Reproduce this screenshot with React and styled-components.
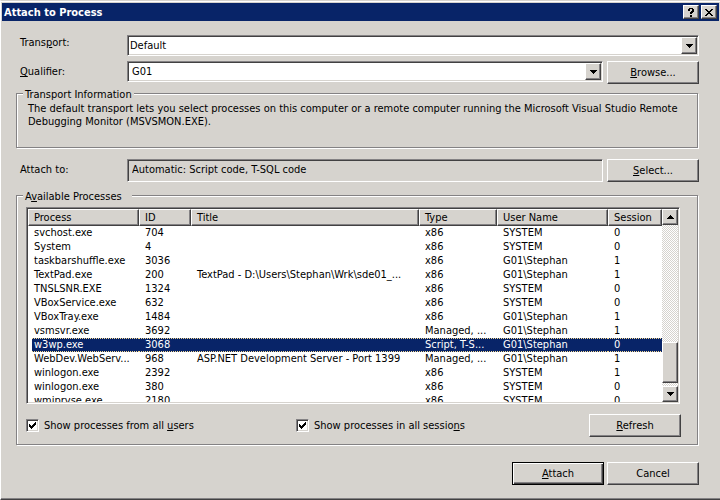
import React, { useState } from "react";
import styled, { createGlobalStyle, css } from "styled-components";

const GlobalStyle = createGlobalStyle`
  * {
    box-sizing: border-box;
  }

  body {
    margin: 0;
    background: #d6d3ce;
  }

  body, button, input, select {
    font-family: Tahoma, "DejaVu Sans Condensed", "DejaVu Sans", sans-serif;
    font-stretch: condensed;
    font-size: 11px;
    line-height: 13px;
    color: #000;
  }
`;

const raised = css`
  border: 1px solid;
  border-color: #fff #424142 #424142 #fff;
  box-shadow: inset -1px -1px 0 #848284;
`;

const sunken = css`
  border: 1px solid;
  border-color: #848284 #fff #fff #848284;
  box-shadow: inset 1px 1px 0 #424142, inset -1px -1px 0 #d6d3ce;
`;

const Dialog = styled.main`
  display: flex;
  flex-direction: column;
  min-height: 100vh;
  padding: 1px 1px 0;
  background: #d6d3ce;
  border-top: 1px solid #d6d3ce;
  border-left: 1px solid #fff;
  border-bottom: 1px solid #424142;
  box-shadow: inset 0 1px 0 #fff, inset 0 -1px 0 #848284;
`;

const TitleBar = styled.header`
  display: flex;
  align-items: center;
  gap: 2px;
  height: 18px;
  margin-top: 1px;
  padding: 0 2px;
  background: #082468;
`;

const Title = styled.h1`
  flex: 1;
  margin: 0;
  color: #fff;
  font-size: 11px;
  font-weight: bold;
`;

const CaptionButton = styled.button`
  ${raised}
  display: flex;
  align-items: center;
  justify-content: center;
  width: 16px;
  height: 14px;
  padding: 0;
  background: #d6d3ce;
`;

const Content = styled.form`
  display: flex;
  flex-direction: column;
  padding: 14px 20px 12px 14px;
`;

const Row = styled.div`
  display: flex;
  align-items: flex-start;
  gap: 4px;
  margin: ${(p) => p.$margin};
`;

const Label = styled.label`
  width: 107px;
  padding: ${(p) => (p.$high ? "1px" : "4px")} 0 0 4px;
`;

const Combo = styled.div`
  position: relative;
  display: flex;
  flex: 1;
`;

const Select = styled.select`
  ${sunken}
  appearance: none;
  flex: 1;
  height: 21px;
  padding: 0 20px 0 ${(p) => p.$indent}px;
  background: #fff;
  border-radius: 0;
  outline: none;
`;

const ComboArrow = styled.span`
  ${raised}
  position: absolute;
  top: 2px;
  right: 2px;
  display: flex;
  align-items: center;
  justify-content: center;
  width: 16px;
  height: 17px;
  background: #d6d3ce;
  pointer-events: none;
`;

const TextBox = styled.input`
  ${sunken}
  flex: 1;
  min-width: 0;
  height: 23px;
  padding: 0 4px 2px;
  background: #d6d3ce;
  outline: none;
`;

const Button = styled.button`
  ${raised}
  width: 92px;
  height: 23px;
  padding: 0;
  background: #d6d3ce;
  ${(p) =>
    p.$default &&
    css`
      border-color: #000;
      box-shadow: inset 1px 1px 0 #fff, inset -1px -1px 0 #424142,
        inset -2px -2px 0 #848284;
    `}
`;

const Group = styled.fieldset`
  min-width: 0;
  margin: 0 1px 0 0;
  padding: 0 16px 0 9px;
  border: 1px solid #848284;
  box-shadow: inset 1px 1px 0 #fff, 1px 1px 0 #fff;
`;

const Legend = styled.legend`
  margin-left: -3px;
  padding: 2px ${(p) => p.$gap || 2}px 0 2px;
  background: #d6d3ce;
`;

const Info = styled.p`
  margin: 0;
  padding: 1px 0 19px 2px;
`;

const List = styled.div`
  ${sunken}
  display: flex;
  height: 197px;
  margin: 4px 1px 0 0;
  padding: 1px;
  background: #fff;
`;

const TableView = styled.div`
  flex: 1;
  min-width: 0;
  overflow: hidden;
`;

const Table = styled.table`
  width: 100%;
  table-layout: fixed;
  border-spacing: 0;
`;

const HeadCell = styled.th`
  width: ${(p) => p.$width};
  height: 17px;
  padding: 0 0 0 5px;
  background: #d6d3ce;
  border: 1px solid;
  border-color: #fff #424142 #424142 #fff;
  box-shadow: inset -1px -1px 0 #848284;
  font-weight: normal;
  line-height: 15px;
  text-align: left;
`;

const Cell = styled.td`
  height: 14px;
  padding: 0 0 0 6px;
  line-height: 14px;
  white-space: nowrap;
  overflow: hidden;

  &:first-child {
    padding-left: 2px;
    border-left: 4px solid #fff;
  }
`;

const focusDots = "repeating-linear-gradient(90deg, #f7db94 0 1px, #082468 1px 2px)";

const ProcessRow = styled.tr`
  ${(p) =>
    p.$selected &&
    css`
      color: #fff;

      ${Cell} {
        background: ${focusDots} top / 100% 1px no-repeat,
          ${focusDots} bottom / 100% 1px no-repeat, #082468;
      }
    `}
`;

const ScrollBar = styled.div`
  display: flex;
  flex-direction: column;
  width: 16px;
  background: repeating-conic-gradient(#d6d3ce 0 25%, #fff 0 50%) 0 0 / 2px 2px;
`;

const ScrollButton = styled.button`
  ${raised}
  display: flex;
  align-items: center;
  justify-content: center;
  height: 16px;
  padding: 0;
  background: #d6d3ce;
`;

const Thumb = styled.div`
  ${raised}
  height: 41px;
  margin: auto 0 3px;
  background: #d6d3ce;
`;

const Options = styled.div`
  display: flex;
  align-items: center;
  margin: 10px 0 7px;
`;

const Option = styled.label`
  display: flex;
  align-items: center;
  flex: ${(p) => (p.$grow ? "1" : "0 0 270px")};
  gap: 5px;
`;

const CheckFrame = styled.span`
  position: relative;
  display: flex;
`;

const CheckBox = styled.input`
  ${sunken}
  appearance: none;
  width: 13px;
  height: 13px;
  margin: 0;
  background: #fff;

  & + svg {
    position: absolute;
    top: 3px;
    left: 3px;
    pointer-events: none;
    visibility: hidden;
  }

  &:checked + svg {
    visibility: visible;
  }
`;

const Footer = styled.footer`
  display: flex;
  justify-content: flex-end;
  gap: 3px;
  margin-top: 17px;
`;

const columns = [
  { name: "Process", width: "111px" },
  { name: "ID", width: "52px" },
  { name: "Title", width: "auto" },
  { name: "Type", width: "78px" },
  { name: "User Name", width: "111px" },
  { name: "Session", width: "54px" },
];

const processes = [
  ["svchost.exe", "704", "", "x86", "SYSTEM", "0"],
  ["System", "4", "", "x86", "SYSTEM", "0"],
  ["taskbarshuffle.exe", "3036", "", "x86", "G01\\Stephan", "1"],
  ["TextPad.exe", "200", "TextPad - D:\\Users\\Stephan\\Wrk\\sde01_...", "x86", "G01\\Stephan", "1"],
  ["TNSLSNR.EXE", "1324", "", "x86", "SYSTEM", "0"],
  ["VBoxService.exe", "632", "", "x86", "SYSTEM", "0"],
  ["VBoxTray.exe", "1484", "", "x86", "G01\\Stephan", "1"],
  ["vsmsvr.exe", "3692", "", "Managed, ...", "G01\\Stephan", "1"],
  ["w3wp.exe", "3068", "", "Script, T-S...", "G01\\Stephan", "0"],
  ["WebDev.WebServ...", "968", "ASP.NET Development Server - Port 1399", "Managed, ...", "G01\\Stephan", "1"],
  ["winlogon.exe", "2392", "", "x86", "SYSTEM", "1"],
  ["winlogon.exe", "380", "", "x86", "SYSTEM", "0"],
  ["wmiprvse.exe", "2180", "", "x86", "SYSTEM", "0"],
];

function Arrow({ up }) {
  return (
    <svg width="7" height="4" shapeRendering="crispEdges" aria-hidden="true">
      <path d={up ? "M3 0h1v1h1v1h1v1h1v1H0V3h1V2h1V1h1z" : "M0 0h7v1H6v1H5v1H4v1H3V3H2V2H1V1H0z"} />
    </svg>
  );
}

function CheckOption({ id, grow, children }) {
  const [checked, setChecked] = useState(true);

  return (
    <Option htmlFor={id} $grow={grow}>
      <CheckFrame>
        <CheckBox
          id={id}
          type="checkbox"
          checked={checked}
          onChange={(e) => setChecked(e.target.checked)}
        />
        <svg width="7" height="7" shapeRendering="crispEdges" aria-hidden="true">
          <path d="M0 2h1v1h1v1h1V3h1V2h1V1h1V0h1v3H6v1H5v1H4v1H3v1H2V6H1V5H0z" />
        </svg>
      </CheckFrame>
      <span>{children}</span>
    </Option>
  );
}

function App() {
  const [selected, setSelected] = useState(8);

  return (
    <>
      <GlobalStyle />
      <Dialog>
        <TitleBar>
          <Title>Attach to Process</Title>
          <CaptionButton type="button" aria-label="Help">
            <svg width="6" height="9" shapeRendering="crispEdges">
              <path d="M1 0h4v1h1v3H5v1H4v1H2V4h1V3h1V1H2v2H0V1h1zM2 7h2v2H2z" />
            </svg>
          </CaptionButton>
          <CaptionButton type="button" aria-label="Close">
            <svg width="8" height="7" shapeRendering="crispEdges">
              <path d="M0 0h2v1h1v1h2V1h1V0h2v1H7v1H6v1H5v1h1v1h1v1h1v1H6V6H5V5H3v1H2v1H0V6h1V5h1V4h1V3H2V2H1V1H0z" />
            </svg>
          </CaptionButton>
        </TitleBar>

        <Content onSubmit={(e) => e.preventDefault()}>
          <Row $margin="0 0 5px">
            <Label htmlFor="transport" $high>
              Trans<u>p</u>ort:
            </Label>
            <Combo>
              <Select id="transport" $indent={2}>
                <option>Default</option>
              </Select>
              <ComboArrow>
                <Arrow />
              </ComboArrow>
            </Combo>
          </Row>
          <Row $margin="0 0 2px">
            <Label htmlFor="qualifier">
              <u>Q</u>ualifier:
            </Label>
            <Combo>
              <Select id="qualifier" $indent={4}>
                <option>G01</option>
              </Select>
              <ComboArrow>
                <Arrow />
              </ComboArrow>
            </Combo>
            <Button type="button">
              <u>B</u>rowse...
            </Button>
          </Row>

          <Group>
            <Legend>Transport Information</Legend>
            <Info>
              The default transport lets you select processes on this computer or a remote computer
              running the Microsoft Visual Studio Remote Debugging Monitor (MSVSMON.EXE).
            </Info>
          </Group>

          <Row $margin="11px 0 6px">
            <Label htmlFor="attach-to">Attach to:</Label>
            <TextBox id="attach-to" readOnly value="Automatic: Script code, T-SQL code" />
            <Button type="button">
              <u>S</u>elect...
            </Button>
          </Row>

          <Group>
            <Legend $gap={10}>
              A<u>v</u>ailable Processes
            </Legend>
            <List>
              <TableView>
                <Table>
                  <thead>
                    <tr>
                      {columns.map((col) => (
                        <HeadCell key={col.name} $width={col.width}>
                          {col.name}
                        </HeadCell>
                      ))}
                    </tr>
                  </thead>
                  <tbody>
                    {processes.map((process, i) => (
                      <ProcessRow
                        key={process[1]}
                        $selected={i === selected}
                        onClick={() => setSelected(i)}
                      >
                        {process.map((value, j) => (
                          <Cell key={columns[j].name}>{value}</Cell>
                        ))}
                      </ProcessRow>
                    ))}
                  </tbody>
                </Table>
              </TableView>
              <ScrollBar>
                <ScrollButton type="button" aria-label="Scroll up">
                  <Arrow up />
                </ScrollButton>
                <Thumb />
                <ScrollButton type="button" aria-label="Scroll down">
                  <Arrow />
                </ScrollButton>
              </ScrollBar>
            </List>
            <Options>
              <CheckOption id="all-users">
                Show processes from all <u>u</u>sers
              </CheckOption>
              <CheckOption id="all-sessions" grow>
                Show processes in all sessio<u>n</u>s
              </CheckOption>
              <Button type="button">
                <u>R</u>efresh
              </Button>
            </Options>
          </Group>

          <Footer>
            <Button type="submit" $default>
              <u>A</u>ttach
            </Button>
            <Button type="button">Cancel</Button>
          </Footer>
        </Content>
      </Dialog>
    </>
  );
}

export default App;
